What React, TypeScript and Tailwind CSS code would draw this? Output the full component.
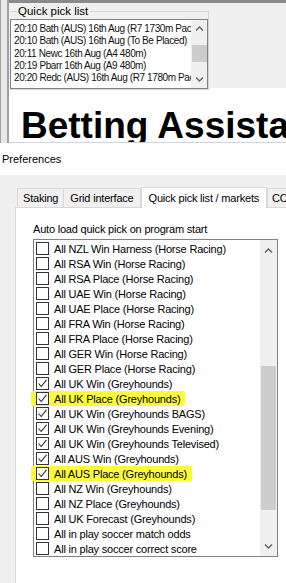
import React from "react";

const quickPicks = [
  "20:10 Bath (AUS) 16th Aug (R7 1730m Pace)",
  "20:10 Bath (AUS) 16th Aug (To Be Placed)",
  "20:11 Newc 16th Aug (A4 480m)",
  "20:19 Pbarr 16th Aug (A9 480m)",
  "20:20 Redc (AUS) 16th Aug (R7 1780m Pace)",
];

type Market = { label: string; checked?: boolean; marked?: boolean };

const markets: Market[] = [
  { label: "All NZL Win Harness (Horse Racing)" },
  { label: "All RSA Win (Horse Racing)" },
  { label: "All RSA Place (Horse Racing)" },
  { label: "All UAE Win (Horse Racing)" },
  { label: "All UAE Place (Horse Racing)" },
  { label: "All FRA Win (Horse Racing)" },
  { label: "All FRA Place (Horse Racing)" },
  { label: "All GER Win (Horse Racing)" },
  { label: "All GER Place (Horse Racing)" },
  { label: "All UK Win (Greyhounds)", checked: true },
  { label: "All UK Place (Greyhounds)", checked: true, marked: true },
  { label: "All UK Win (Greyhounds BAGS)", checked: true },
  { label: "All UK Win (Greyhounds Evening)", checked: true },
  { label: "All UK Win (Greyhounds Televised)", checked: true },
  { label: "All AUS Win (Greyhounds)", checked: true },
  { label: "All AUS Place (Greyhounds)", checked: true, marked: true },
  { label: "All NZ Win (Greyhounds)" },
  { label: "All NZ Place (Greyhounds)" },
  { label: "All UK Forecast (Greyhounds)" },
  { label: "All in play soccer match odds" },
  { label: "All in play soccer correct score" },
];

function Chevron({ down }: { down?: boolean }) {
  return (
    <svg width="9" height="6" viewBox="0 0 9 6" className="block">
      <path
        d={down ? "M1 1.5 L4.5 5 L8 1.5" : "M1 4.5 L4.5 1 L8 4.5"}
        fill="none"
        stroke="#606060"
        strokeWidth="1.4"
      />
    </svg>
  );
}

function CheckBox({ checked }: { checked?: boolean }) {
  return (
    <span className="w-[13px] h-[13px] border border-[#333333] bg-white flex items-center justify-center shrink-0">
      {checked && (
        <svg width="11" height="11" viewBox="0 0 11 11">
          <path d="M1.5 5.5 L4.2 8.5 L9.5 1.8" fill="none" stroke="#2b2b2b" strokeWidth="1.1" />
        </svg>
      )}
    </span>
  );
}

function App() {
  return (
    <div
      className="w-[286px] h-[583px] overflow-hidden bg-[#f0f0f0] text-black text-[11px] tracking-[-0.2px]"
      style={{ fontFamily: "'Liberation Sans', Arial, sans-serif" }}
    >
      {/* old main window behind */}
      <div className="flex h-[143px]">
        <div className="w-[9px] shrink-0 border-l border-r-2 border-[#a0a0a0] bg-[#e8e8e8]" />
        <div className="flex-1 flex flex-col min-w-0 border-t-[3px] border-[#8a8a8a]">
          <div className="h-[85px] bg-[#f0f0f0] pt-[2px] pl-[1px]">
            <div className="relative w-[199px] border border-[#d5d5d5] border-l-0 mt-[6px] pt-[7px]">
              <span className="absolute -top-[8px] left-[6px] px-[2px] bg-[#f0f0f0] text-[11.5px] leading-[14px] tracking-normal">
                Quick pick list
              </span>
              <div className="flex h-[70px] border border-[#828282] bg-white">
                <div className="flex-1 min-w-0 overflow-hidden pl-[3px] pt-[3px] text-[10px] leading-[12.3px] tracking-[-0.4px] text-[#111]">
                  {quickPicks.map((q) => (
                    <div key={q} className="whitespace-nowrap">{q}</div>
                  ))}
                </div>
                <div className="w-[16px] shrink-0 bg-[#f0f0f0] flex flex-col items-center justify-between py-[6px]">
                  <Chevron />
                  <div className="w-[15px] h-[17px] bg-[#cdcdcd] -mt-[2px]" />
                  <Chevron down />
                </div>
              </div>
            </div>
          </div>
          <div className="flex-1 bg-white overflow-hidden pl-[12px] border-b border-[#c9d6e6]">
            <div className="whitespace-nowrap font-bold text-[37px] leading-[40px] pt-[18px] tracking-normal">
              Betting Assistant
            </div>
          </div>
        </div>
      </div>

      {/* preferences dialog */}
      <div className="h-[32px] bg-white flex items-center pl-[2px] text-[11px] tracking-normal">Preferences</div>

      <div className="pl-[15px] pt-[11px]">
        <div className="flex items-end h-[21px] pl-[2px] whitespace-nowrap">
          <div className="h-[19px] px-[5px] border border-b-0 border-[#d9d9d9] flex items-center">Staking</div>
          <div className="h-[19px] px-[6px] border border-b-0 border-l-0 border-[#d9d9d9] flex items-center">Grid interface</div>
          <div className="h-[21px] px-[7px] -mb-px bg-white border border-b-0 border-[#d9d9d9] flex items-center z-10">
            Quick pick list / markets
          </div>
          <div className="h-[19px] px-[4px] border border-b-0 border-[#d9d9d9] flex items-center">CO</div>
        </div>
        <div className="h-[376px] bg-white border-l border-t border-[#d9d9d9] pl-[17px] pt-[13px]">
          <div className="leading-[16px]">Auto load quick pick on program start</div>
          <div className="mt-[2px] w-[245px] h-[318px] border border-[#828282] flex">
            <div className="flex-1 pt-[1px] pl-[2px]">
              {markets.map((m) => (
                <div key={m.label} className="h-[15px] flex items-center">
                  <div
                    className={
                      m.marked
                        ? "flex items-center gap-[5px] h-[15px] -ml-[5px] pl-[5px] pr-[5px] bg-[#fcfc38] rounded-[2px]"
                        : "flex items-center gap-[5px]"
                    }
                  >
                    <CheckBox checked={m.checked} />
                    <span className="whitespace-nowrap leading-[14px]">{m.label}</span>
                  </div>
                </div>
              ))}
            </div>
            <div className="w-[17px] shrink-0 bg-[#f0f0f0] flex flex-col items-center pt-[8px] pb-[7px]">
              <Chevron />
              <div className="w-[15px] h-[144px] bg-[#cdcdcd] mt-[112px]" />
              <div className="flex-1" />
              <Chevron down />
            </div>
          </div>
        </div>
      </div>
    </div>
  );
}

export default App;
